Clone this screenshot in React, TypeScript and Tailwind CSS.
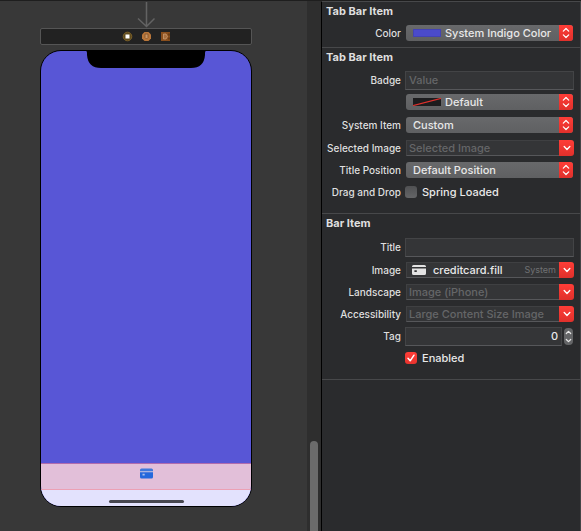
import React from "react";

function CardIcon({ className }: { className: string }) {
  return (
    <svg viewBox="0 0 14 10" className={className} aria-hidden="true">
      <path
        fill="currentColor"
        fillRule="evenodd"
        d="M1.6 0h10.8A1.6 1.6 0 0 1 14 1.6V2H0v-.4A1.6 1.6 0 0 1 1.6 0ZM0 3.4h14v5A1.6 1.6 0 0 1 12.4 10H1.6A1.6 1.6 0 0 1 0 8.400ZM2.400 5.200v1.800h2.400V5.200Z"
      />
    </svg>
  );
}

function TabCardIcon() {
  return (
    <svg viewBox="0 0 13 11" className="h-[11px] w-[13px]" aria-hidden="true">
      <path d="M0 3V2Q0 .5 1.500 .5h10Q13 .5 13 2v1Z" fill="#3f78dc" />
      <path d="M0 3h13v1.200H0Z" fill="#a9b4e0" />
      <path d="M0 4.200h13V9q0 1.500-1.500 1.500h-10Q0 10.500 0 9Z" fill="#2468dc" />
      <path d="M2.500 5.800h2.200v1.800H2.500Z" fill="#a9bdea" />
    </svg>
  );
}

function UpDown({ className }: { className: string }) {
  return (
    <svg viewBox="0 0 8 12" className={className} fill="none" stroke="currentColor" strokeWidth="1.2" strokeLinecap="round" strokeLinejoin="round" aria-hidden="true">
      <path d="M1.300 4.200 4 1.500l2.700 2.700M1.300 7.800 4 10.500l2.700-2.700" />
    </svg>
  );
}

function Section({ title, className = "", children }: { title: string; className?: string; children: React.ReactNode }) {
  return (
    <section className={`border-b border-[#47484a] ${className}`}>
      <h2 className="h-5 pl-1 text-[11px] leading-[18px] font-bold text-[#dfdfdf]">{title}</h2>
      {children}
    </section>
  );
}

function Row({ label, id, tall = false, children }: { label?: string; id?: string; tall?: boolean; children: React.ReactNode }) {
  return (
    <div className={`grid grid-cols-[79px_minmax(0,1fr)] items-center gap-x-1 pr-1.5 ${tall ? "h-6" : "h-[22px]"}`}>
      {label ? (
        <label htmlFor={id} className="text-right text-[10px] leading-4 font-medium whitespace-nowrap text-[#dfdfdf]">
          {label}
        </label>
      ) : (
        <span />
      )}
      {children}
    </div>
  );
}

function Popup({ id, value, name, swatch }: { id: string; value: string; name?: string; swatch?: React.ReactNode }) {
  return (
    <div className="relative mx-px h-4">
      <select
        id={id}
        aria-label={name}
        className={`block h-4 w-full appearance-none rounded-[3px] bg-linear-to-b from-[#68696b] to-[#5f6062] pr-4 text-[11px] leading-4 font-medium text-[#e8e8e8] outline-none ${swatch ? "pl-[39px]" : "pl-[7px]"}`}
      >
        <option>{value}</option>
      </select>
      {swatch}
      <span className="pointer-events-none absolute inset-y-0 right-0 flex w-3.5 items-center justify-center rounded-r-[3px] bg-linear-to-b from-[#ff3d37] to-[#e0302b] text-white">
        <UpDown className="h-3 w-2" />
      </span>
    </div>
  );
}

function Combo({ id, placeholder, value, icon, note }: { id: string; placeholder?: string; value?: string; icon?: React.ReactNode; note?: string }) {
  return (
    <div className="ml-px flex h-4">
      <div className="flex min-w-0 flex-1 items-center border-y border-l border-t-[#3f4042] border-b-[#56575a] border-l-[#3f4042] bg-[#343537]">
        {icon}
        <input
          id={id}
          defaultValue={value}
          placeholder={placeholder}
          className={`h-3.5 w-full min-w-0 flex-1 bg-transparent text-[11px] leading-3.5 font-medium text-[#e8e8e8] outline-none placeholder:text-[#656668] ${icon ? "pl-[7px]" : "pl-0.5"}`}
        />
        {note && <span className="pr-[3px] text-[9px] leading-3.5 text-[#707173]">{note}</span>}
      </div>
      <button
        type="button"
        aria-label="Show choices"
        className="flex w-[15px] items-center justify-center rounded-r-[3px] bg-linear-to-b from-[#ff3d37] to-[#e0302b] text-white"
      >
        <svg viewBox="0 0 8 6" className="h-1.5 w-2" fill="none" stroke="currentColor" strokeWidth="1.4" strokeLinecap="round" strokeLinejoin="round" aria-hidden="true">
          <path d="M1.200 1.600 4 4.400l2.800-2.800" />
        </svg>
      </button>
    </div>
  );
}

const FIELD =
  "h-[19px] w-full min-w-0 border border-[#434446] border-b-[#56575a] bg-[#343537] px-[3px] text-[11px] leading-4 font-medium text-[#e8e8e8] outline-none placeholder:text-[#656668]";

function Tick({ id, label, checked = false }: { id: string; label: string; checked?: boolean }) {
  return (
    <label htmlFor={id} className="flex items-center gap-[5px] text-[11px] leading-4 font-medium text-[#e8e8e8]">
      <span className="relative size-3">
        <input
          id={id}
          type="checkbox"
          defaultChecked={checked}
          className="peer block size-3 appearance-none rounded-[3px] bg-linear-to-b from-[#505153] to-[#646567] checked:from-[#ff3d37] checked:to-[#e8332e]"
        />
        <svg viewBox="0 0 12 12" className="pointer-events-none absolute inset-0 hidden size-3 peer-checked:block" fill="none" stroke="#fff" strokeWidth="1.500" strokeLinecap="round" strokeLinejoin="round" aria-hidden="true">
          <path d="m3 6.300 2.200 2.500L9 3.200" />
        </svg>
      </span>
      {label}
    </label>
  );
}

function Canvas() {
  return (
    <main className="flex min-w-0 flex-1 flex-col overflow-hidden bg-[#383838] pl-10">
      <div className="flex w-[212px] flex-col">
        <svg viewBox="0 0 18 27" className="h-[27px] w-[18px] self-center" fill="none" stroke="#636363" strokeWidth="1.500" aria-hidden="true">
          <path d="M9.500 1v24M1 17.500l8.500 8 8-8" />
        </svg>
        <div className="flex h-[17px] items-center justify-center gap-2 rounded-[2px] border border-[#555] bg-[#222]">
          <svg viewBox="0 0 11 11" className="size-[11px]" aria-label="View controller">
            <circle cx="5.500" cy="5.500" r="4.300" fill="#5d4a1e" stroke="#7b6028" />
            <rect x="3.500" y="3.500" width="4" height="4" fill="#fff" />
          </svg>
          <svg viewBox="0 0 11 11" className="size-[11px]" aria-label="First responder">
            <path d="M3.500 1h4L10 3.500v4L7.500 10h-4L1 7.500v-4Z" fill="#b8763a" />
            <path d="M4 3h3v3.500L5.500 8 4 6.500Z" fill="#c99563" stroke="#80502a" strokeWidth=".8" />
          </svg>
          <svg viewBox="0 0 11 11" className="size-[11px]" aria-label="Exit">
            <rect x="1" y="1" width="9" height="9" fill="#8a4f1d" />
            <path d="M3.500 3H6l1.500 2.500L6 8H3.500Z" fill="#a86f3e" stroke="#c99a70" strokeWidth=".8" />
            <path d="M9 2.500v2M9 6.500v2" stroke="#4a2c12" />
          </svg>
        </div>
        <div className="mt-[5px] flex aspect-[212/457] flex-col overflow-hidden rounded-[21px] border border-black bg-[#5856d6]">
          <div className="flex flex-1 justify-center">
            <svg viewBox="0 0 120 17" className="h-[17px] w-[120px]" aria-hidden="true">
              <path d="M0 0h120q-1 0-1 2v2q-1 13-14 13H15Q2 17 1 4V2Q1 0 0 0Z" />
            </svg>
          </div>
          <div className="flex h-[27px] justify-center border-y border-t-[#b06cae] border-b-[#eca0b4] bg-[#e2bfd9] pt-1">
            <TabCardIcon />
          </div>
          <div className="flex h-4 justify-center bg-[#e3e2fd] pt-2.5">
            <div className="h-[3px] w-[75px] rounded-full bg-[#474750]" />
          </div>
        </div>
      </div>
    </main>
  );
}

export default function App() {
  return (
    <div className="flex h-screen flex-col overflow-hidden border-t border-[#1e1e1e] bg-[#383838] font-['Inter','Liberation_Sans',sans-serif]">
      <div className="flex min-h-0 flex-1">
        <Canvas />
        <div className="flex w-3.5 flex-col justify-end bg-[#2e2e2e] pr-[3px] pl-[3px]">
          <div className="h-[17%] rounded-t-full bg-[#6b6b6b]" />
        </div>
        <aside className="w-[260px] overflow-hidden border-t border-r border-l border-t-[#47484a] border-r-[#444547] border-l-black bg-[#2a2b2d]">
          <Section title="Tab Bar Item" className="pb-[3px]">
            <Row label="Color" id="color">
              <Popup
                id="color"
                value="System Indigo Color"
                swatch={<span className="pointer-events-none absolute top-1 left-[7px] h-2 w-7 border border-[#4343b4] bg-[#4b4bcb]" />}
              />
            </Row>
          </Section>
          <Section title="Tab Bar Item" className="pb-[10px]">
            <div className="pt-px">
              <Row label="Badge" id="badge">
                <input id="badge" placeholder="Value" className={FIELD} />
              </Row>
              <Row>
                <Popup
                  id="badge-color"
                  name="Badge color"
                  value="Default"
                  swatch={
                    <svg viewBox="0 0 28 8" className="pointer-events-none absolute top-1 left-[7px] h-2 w-7" aria-hidden="true">
                      <path d="M0 0h28v8H0Z" fill="#1c1c1e" />
                      <path d="M0 7.600 28 .400" stroke="#e0312d" strokeWidth="1.200" />
                    </svg>
                  }
                />
              </Row>
              <Row label="System Item" id="system-item" tall>
                <Popup id="system-item" value="Custom" />
              </Row>
              <Row label="Selected Image" id="selected-image">
                <Combo id="selected-image" placeholder="Selected Image" />
              </Row>
              <Row label="Title Position" id="title-position">
                <Popup id="title-position" value="Default Position" />
              </Row>
              <Row label="Drag and Drop" id="spring">
                <Tick id="spring" label="Spring Loaded" />
              </Row>
            </div>
          </Section>
          <Section title="Bar Item" className="pb-[10px]">
            <div className="pt-px">
              <Row label="Title" id="title" tall>
                <input id="title" className={FIELD} />
              </Row>
              <Row label="Image" id="image">
                <Combo
                  id="image"
                  value="creditcard.fill"
                  note="System"
                  icon={<CardIcon className="ml-[5px] h-[10px] w-[14px] shrink-0 text-[#e3e3e3]" />}
                />
              </Row>
              <Row label="Landscape" id="landscape">
                <Combo id="landscape" placeholder="Image (iPhone)" />
              </Row>
              <Row label="Accessibility" id="accessibility">
                <Combo id="accessibility" placeholder="Large Content Size Image" />
              </Row>
              <Row label="Tag" id="tag">
                <div className="flex items-center gap-0.5 pr-px">
                  <input id="tag" defaultValue="0" inputMode="numeric" className={`${FIELD} flex-1 text-right`} />
                  <button type="button" aria-label="Change tag" className="flex h-[17px] w-[9px] items-center justify-center rounded-[4px] bg-[#646567] text-[#e8e8e8]">
                    <svg viewBox="0 0 9 17" className="h-[17px] w-[9px] shrink-0" fill="none" stroke="currentColor" strokeWidth="1.200" strokeLinecap="round" strokeLinejoin="round" aria-hidden="true">
                      <path d="m2.300 5.500 2.200-2.200 2.200 2.200M2.300 11.500l2.200 2.200 2.200-2.200" />
                    </svg>
                  </button>
                </div>
              </Row>
              <Row>
                <Tick id="enabled" label="Enabled" checked />
              </Row>
            </div>
          </Section>
        </aside>
      </div>
    </div>
  );
}
